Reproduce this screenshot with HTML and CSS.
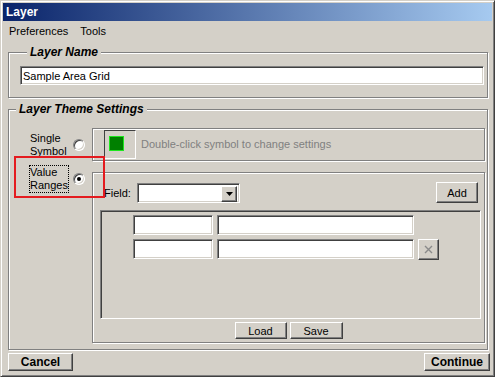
FILE: index.html
```html
<!DOCTYPE html>
<html lang="en">
<head>
    <meta charset="UTF-8">
    <title>Layer</title>
    <link rel="stylesheet" href="styles.css">
</head>
<body>
    <div class="window">
        <div class="titlebar">Layer</div>
        <div class="menubar">
            <span class="menu-item">Preferences</span>
            <span class="menu-item">Tools</span>
        </div>

        <div class="content">
            <div class="group name-group">
                <div class="group-title">Layer Name</div>
                <input class="field name-field" type="text" value="Sample Area Grid">
            </div>

            <div class="group theme-group">
                <div class="group-title">Layer Theme Settings</div>
                <div class="theme-body">
                    <div class="choices">
                        <div class="choice">
                            <span class="choice-label">Single<br>Symbol</span>
                            <span class="radio"></span>
                        </div>
                        <div class="choice">
                            <span class="choice-label focused">Value<br>Ranges</span>
                            <span class="radio checked"></span>
                        </div>
                    </div>

                    <div class="panes">
                        <div class="frame symbol-frame">
                            <div class="symbol-btn"><span class="swatch"></span></div>
                            <span class="hint">Double-click symbol to change settings</span>
                        </div>

                        <div class="frame ranges-frame">
                            <div class="field-row">
                                <span class="field-label">Field:</span>
                                <div class="combo">
                                    <span class="combo-btn">
                                        <svg width="7" height="4" viewBox="0 0 7 4"><polygon points="0,0 7,0 3.5,4" fill="#000"/></svg>
                                    </span>
                                </div>
                                <button class="btn add-btn">Add</button>
                            </div>

                            <div class="ranges-list">
                                <input class="field" type="text">
                                <input class="field" type="text">
                                <span></span>
                                <input class="field" type="text">
                                <input class="field" type="text">
                                <button class="btn remove-btn">
                                    <svg width="9" height="9" viewBox="0 0 9 9"><path d="M1 1 L8 8 M8 1 L1 8" stroke="#8a8a8a" stroke-width="1.4"/></svg>
                                </button>
                            </div>

                            <div class="list-actions">
                                <button class="btn load-btn">Load</button>
                                <button class="btn save-btn">Save</button>
                            </div>
                        </div>
                    </div>
                </div>
            </div>
        </div>

        <div class="footer">
            <button class="btn footer-btn cancel-btn">Cancel</button>
            <button class="btn footer-btn continue-btn">Continue</button>
        </div>

        <div class="highlight"></div>
    </div>
</body>
</html>
```

FILE: styles.css
```css
* {
    box-sizing: border-box;
}

body {
    margin: 0;
    background-color: #d4d0c8;
    font-family: "Liberation Sans", Arial, sans-serif;
    font-size: 11px;
    color: #000;
}

.window {
    position: relative;
    width: 495px;
    height: 377px;
    padding: 2px;
    background-color: #d4d0c8;
    border: 1px solid;
    border-color: #d4d0c8 #404040 #404040 #d4d0c8;
    box-shadow: inset 1px 1px #fff, inset -1px -1px #808080;
}

.titlebar {
    height: 18px;
    padding-left: 3px;
    background: linear-gradient(to right, #0a246a, #a6caf0);
    color: #fff;
    font-weight: bold;
    font-size: 12px;
    line-height: 18px;
}

.menubar {
    display: flex;
    height: 20px;
    line-height: 21px;
}

.menu-item {
    padding: 0 6px;
}

.content {
    padding: 11px 4px 0 5px;
}

/* etched group boxes */
.group {
    border: 1px solid #808080;
    box-shadow: inset 1px 1px #fff, 1px 1px #fff;
}

.group-title {
    display: table;
    margin: -8px 0 0 7px;
    padding: 0 3px;
    background-color: #d4d0c8;
    font-weight: bold;
    font-style: italic;
    font-size: 12px;
    line-height: 14px;
}

.name-group {
    padding: 0 3px 12px 11px;
}

.field {
    display: block;
    height: 20px;
    padding: 0 2px;
    margin: 0;
    background-color: #fff;
    border: 1px solid;
    border-color: #808080 #fff #fff #808080;
    box-shadow: inset 1px 1px #404040, inset -1px -1px #d4d0c8;
    font-family: inherit;
    font-size: 11px;
    outline: none;
}

.name-field {
    width: 100%;
    height: 19px;
    margin-top: 7px;
}

.theme-group {
    margin-top: 11px;
    padding: 0 2px 6px 0;
}

.theme-body {
    display: grid;
    grid-template-columns: 83px 1fr;
    margin-top: 12px;
}

.choices {
    display: flex;
    flex-direction: column;
    gap: 6px;
    padding-top: 3px;
}

.choice {
    display: flex;
    align-items: center;
    padding-left: 20px;
}

.choice-label {
    width: 40px;
    border: 1px solid transparent;
    line-height: 13px;
}

.choice-label.focused {
    border: 1px dotted #000;
}

.radio {
    position: relative;
    width: 12px;
    height: 12px;
    margin-left: 4px;
    background-color: #fff;
    border: 1px solid;
    border-color: #808080 #fff #fff #808080;
    border-radius: 50%;
    box-shadow: inset 1px 1px #404040, inset -1px -1px #d4d0c8;
}

.radio.checked::after {
    content: "";
    position: absolute;
    left: 3px;
    top: 3px;
    width: 4px;
    height: 4px;
    border-radius: 50%;
    background-color: #000;
}

.panes {
    display: flex;
    flex-direction: column;
    gap: 11px;
}

.frame {
    border: 1px solid #808080;
    box-shadow: inset 1px 1px #fff, 1px 1px #fff;
}

.symbol-frame {
    display: flex;
    align-items: center;
    gap: 5px;
    padding: 1px 0 1px 11px;
}

.symbol-btn {
    width: 32px;
    height: 29px;
    padding: 5px 0 0 4px;
    border: 1px solid;
    border-color: #404040 #fff #fff #404040;
}

.swatch {
    display: block;
    width: 15px;
    height: 15px;
    background-color: #008000;
    border: 1px solid #1ee61e;
}

.hint {
    color: #808080;
    padding-bottom: 1px;
}

.field-row {
    display: flex;
    align-items: center;
    padding: 9px 6px 0 11px;
}

.field-label {
    width: 33px;
}

.combo {
    display: flex;
    justify-content: flex-end;
    width: 103px;
    height: 20px;
    padding: 2px;
    background-color: #fff;
    border: 1px solid;
    border-color: #808080 #fff #fff #808080;
    box-shadow: inset 1px 1px #404040, inset -1px -1px #d4d0c8;
}

.combo-btn {
    display: flex;
    align-items: center;
    justify-content: center;
    width: 16px;
    height: 16px;
    background-color: #d4d0c8;
    border: 1px solid;
    border-color: #fff #404040 #404040 #fff;
    box-shadow: inset -1px -1px #808080;
}

.btn {
    margin: 0;
    padding: 0;
    background-color: #d4d0c8;
    border: 1px solid;
    border-color: #fff #404040 #404040 #fff;
    box-shadow: inset -1px -1px #808080;
    font-family: inherit;
    font-size: 11px;
    color: #000;
}

.add-btn {
    width: 42px;
    height: 21px;
    margin-left: auto;
}

.ranges-list {
    display: grid;
    grid-template-columns: 80px 197px 21px;
    grid-auto-rows: 20px;
    gap: 4px;
    height: 109px;
    margin: 7px 3px 0 7px;
    padding: 4px 0 0 32px;
    border: 1px solid;
    border-color: #808080 #fff #fff #808080;
    box-shadow: inset 1px 1px #404040, inset -1px -1px #d4d0c8;
}

.remove-btn {
    display: flex;
    align-items: center;
    justify-content: center;
    height: 21px;
}

.list-actions {
    display: flex;
    justify-content: center;
    gap: 3px;
    padding: 3px 0 3px;
}

.load-btn {
    width: 52px;
    height: 17px;
}

.save-btn {
    width: 53px;
    height: 17px;
}

.footer {
    display: flex;
    justify-content: space-between;
    padding: 3px 2px 0 5px;
}

.footer-btn {
    height: 18px;
    font-weight: bold;
    font-size: 12px;
}

.cancel-btn {
    width: 65px;
}

.continue-btn {
    width: 66px;
}

.highlight {
    position: absolute;
    left: 13px;
    top: 155px;
    width: 91px;
    height: 42px;
    border: 2px solid #e41b1f;
}
```
